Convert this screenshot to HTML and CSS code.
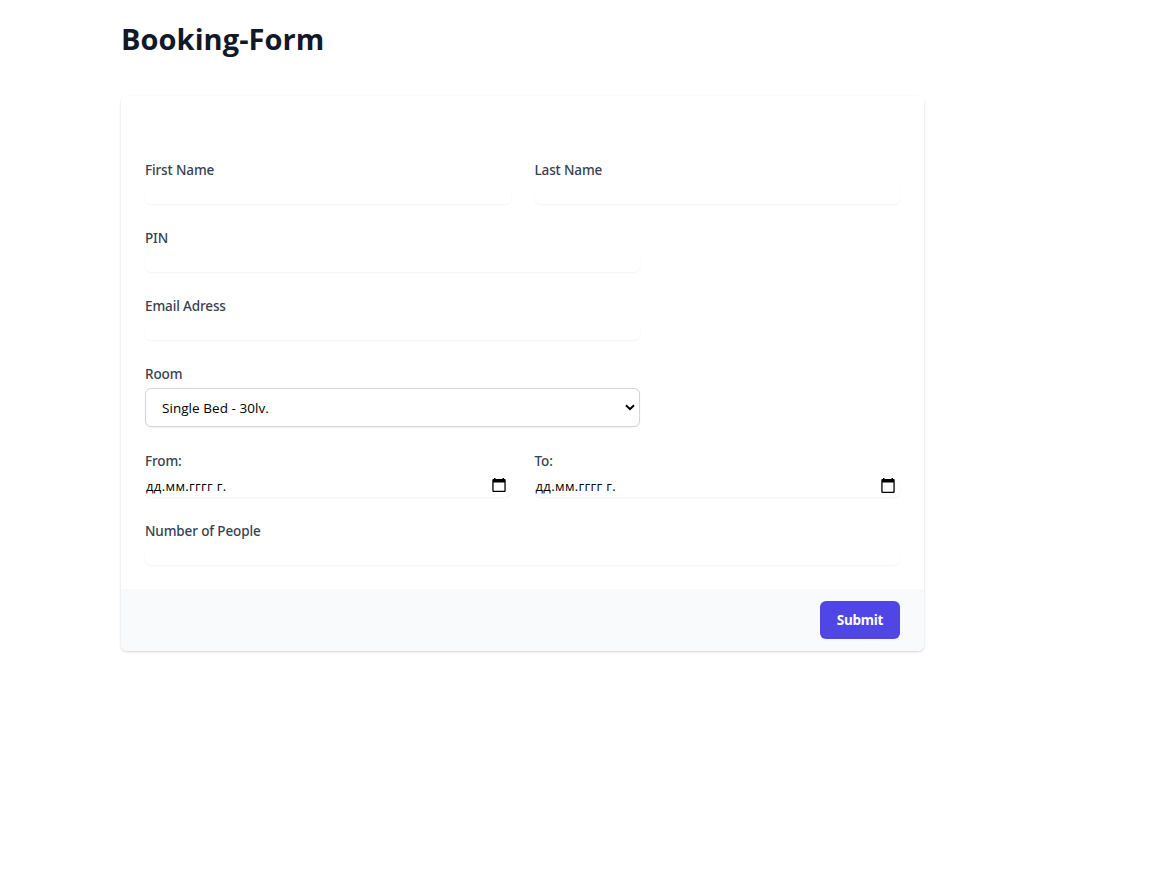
FILE: index.html
```html
<!DOCTYPE html>
<html lang="en">
<head>
<meta charset="utf-8">
<title>Booking-Form</title>
<link rel="stylesheet" href="styles.css">
</head>
<body>
<main class="page">
  <h1 class="title">Booking-Form</h1>
  <form class="card">
    <div class="fields">
      <div class="field half"><label for="first">First Name</label><input id="first" class="input" type="text"></div>
      <div class="field half"><label for="last">Last Name</label><input id="last" class="input" type="text"></div>
      <div class="field wide"><label for="pin">PIN</label><input id="pin" class="input" type="text"></div>
      <div class="field wide"><label for="email">Email Adress</label><input id="email" class="input" type="text"></div>
      <div class="field wide"><label for="room">Room</label>
        <div class="select-wrap">
          <select id="room" class="select"><option>Single Bed - 30lv.</option></select>
          <svg class="chevron" viewBox="0 0 10 7"><path d="M1 1.2l4 4 4-4" fill="none" stroke="#000" stroke-width="2"/></svg>
        </div>
      </div>
      <div class="field half"><label>From:</label>
        <div class="input date"><span class="date-text">дд.мм.гггг г.</span>
          <svg class="calendar" viewBox="0 0 14 15"><path d="M2 0h1.5v1h7V0H12v1h1l.7.7v11.6l-.7.7H1l-.7-.7V1.7L1 1h1zM1.6 4.5v8.2h10.8V4.5z" fill-rule="evenodd"/></svg>
        </div>
      </div>
      <div class="field half"><label>To:</label>
        <div class="input date"><span class="date-text">дд.мм.гггг г.</span>
          <svg class="calendar" viewBox="0 0 14 15"><path d="M2 0h1.5v1h7V0H12v1h1l.7.7v12.6l-.7.7H1l-.7-.7V1.7L1 1h1zM1.6 4.5v9.2h10.8V4.5z" fill-rule="evenodd"/></svg>
        </div>
      </div>
      <div class="field full"><label for="people">Number of People</label><input id="people" class="input" type="text"></div>
    </div>
    <div class="footer"><button type="button" class="submit">Submit</button></div>
  </form>
</main>
</body>
</html>
```
FILE: styles.css
```css
*, *::before, *::after { box-sizing: border-box; }
body {
  margin: 0;
  min-height: 100vh;
  padding: 21px 0 0 121px;
  background: #fff;
  font-family: "Noto Sans", "Open Sans", sans-serif;
}
.page { width: 803px; padding-bottom: 24px; }
.title {
  margin: 0 0 39px;
  color: #111827;
  font-family: "Open Sans", sans-serif;
  font-size: 29px;
  line-height: 36px;
  font-weight: 700;
  letter-spacing: 0.07px;
}
.card {
  border-radius: 6px;
  overflow: hidden;
  box-shadow: 0 1px 3px rgba(0, 0, 0, .1), 0 1px 2px rgba(0, 0, 0, .08);
}
.fields {
  display: grid;
  grid-template-columns: repeat(6, minmax(0, 1fr));
  gap: 24px;
  padding: 64px 24px 24px;
  background: #fff;
}
.half { grid-column: span 3; }
.wide { grid-column: 1 / span 4; }
.full { grid-column: span 6; }
label {
  display: block;
  margin-bottom: 4px;
  color: #374151;
  font-size: 13.5px;
  line-height: 20px;
  font-weight: 500;
  letter-spacing: -0.13px;
}
.input {
  display: block;
  width: 100%;
  height: 20px;
  padding: 0;
  border: 0;
  border-radius: 6px;
  background: #fff;
  box-shadow: 0 1px 2px rgba(0, 0, 0, .05);
}
.select-wrap { position: relative; }
.select {
  appearance: none;
  display: block;
  width: 100%;
  height: 39px;
  padding: 0 28px 0 16px;
  border: 1px solid #d1d5db;
  border-radius: 6px;
  background: #fff;
  box-shadow: 0 1px 2px rgba(0, 0, 0, .05);
  color: #000;
  font: 400 13.5px "Open Sans", sans-serif;
  letter-spacing: 0.05px;
}
.chevron {
  position: absolute;
  top: 16px;
  right: 5px;
  width: 10px;
  height: 7px;
  pointer-events: none;
}
.date {
  display: flex;
  align-items: center;
  justify-content: space-between;
  height: 22px;
  padding: 0 5px 0 1px;
  color: #000;
  font: 400 13px/22px "Open Sans", sans-serif;
}
.date-text { letter-spacing: 0.38px; }
.calendar { width: 14px; height: 15px; margin-bottom: 1px; }
.footer {
  display: flex;
  justify-content: flex-end;
  padding: 12px 24px;
  background: #f9fafb;
}
.submit {
  width: 80px;
  height: 38px;
  padding: 0;
  border: 0;
  border-radius: 6px;
  background: #4f46e5;
  color: #fff;
  font: 700 13.5px/20px "Open Sans", sans-serif;
  letter-spacing: -0.3px;
}
```
